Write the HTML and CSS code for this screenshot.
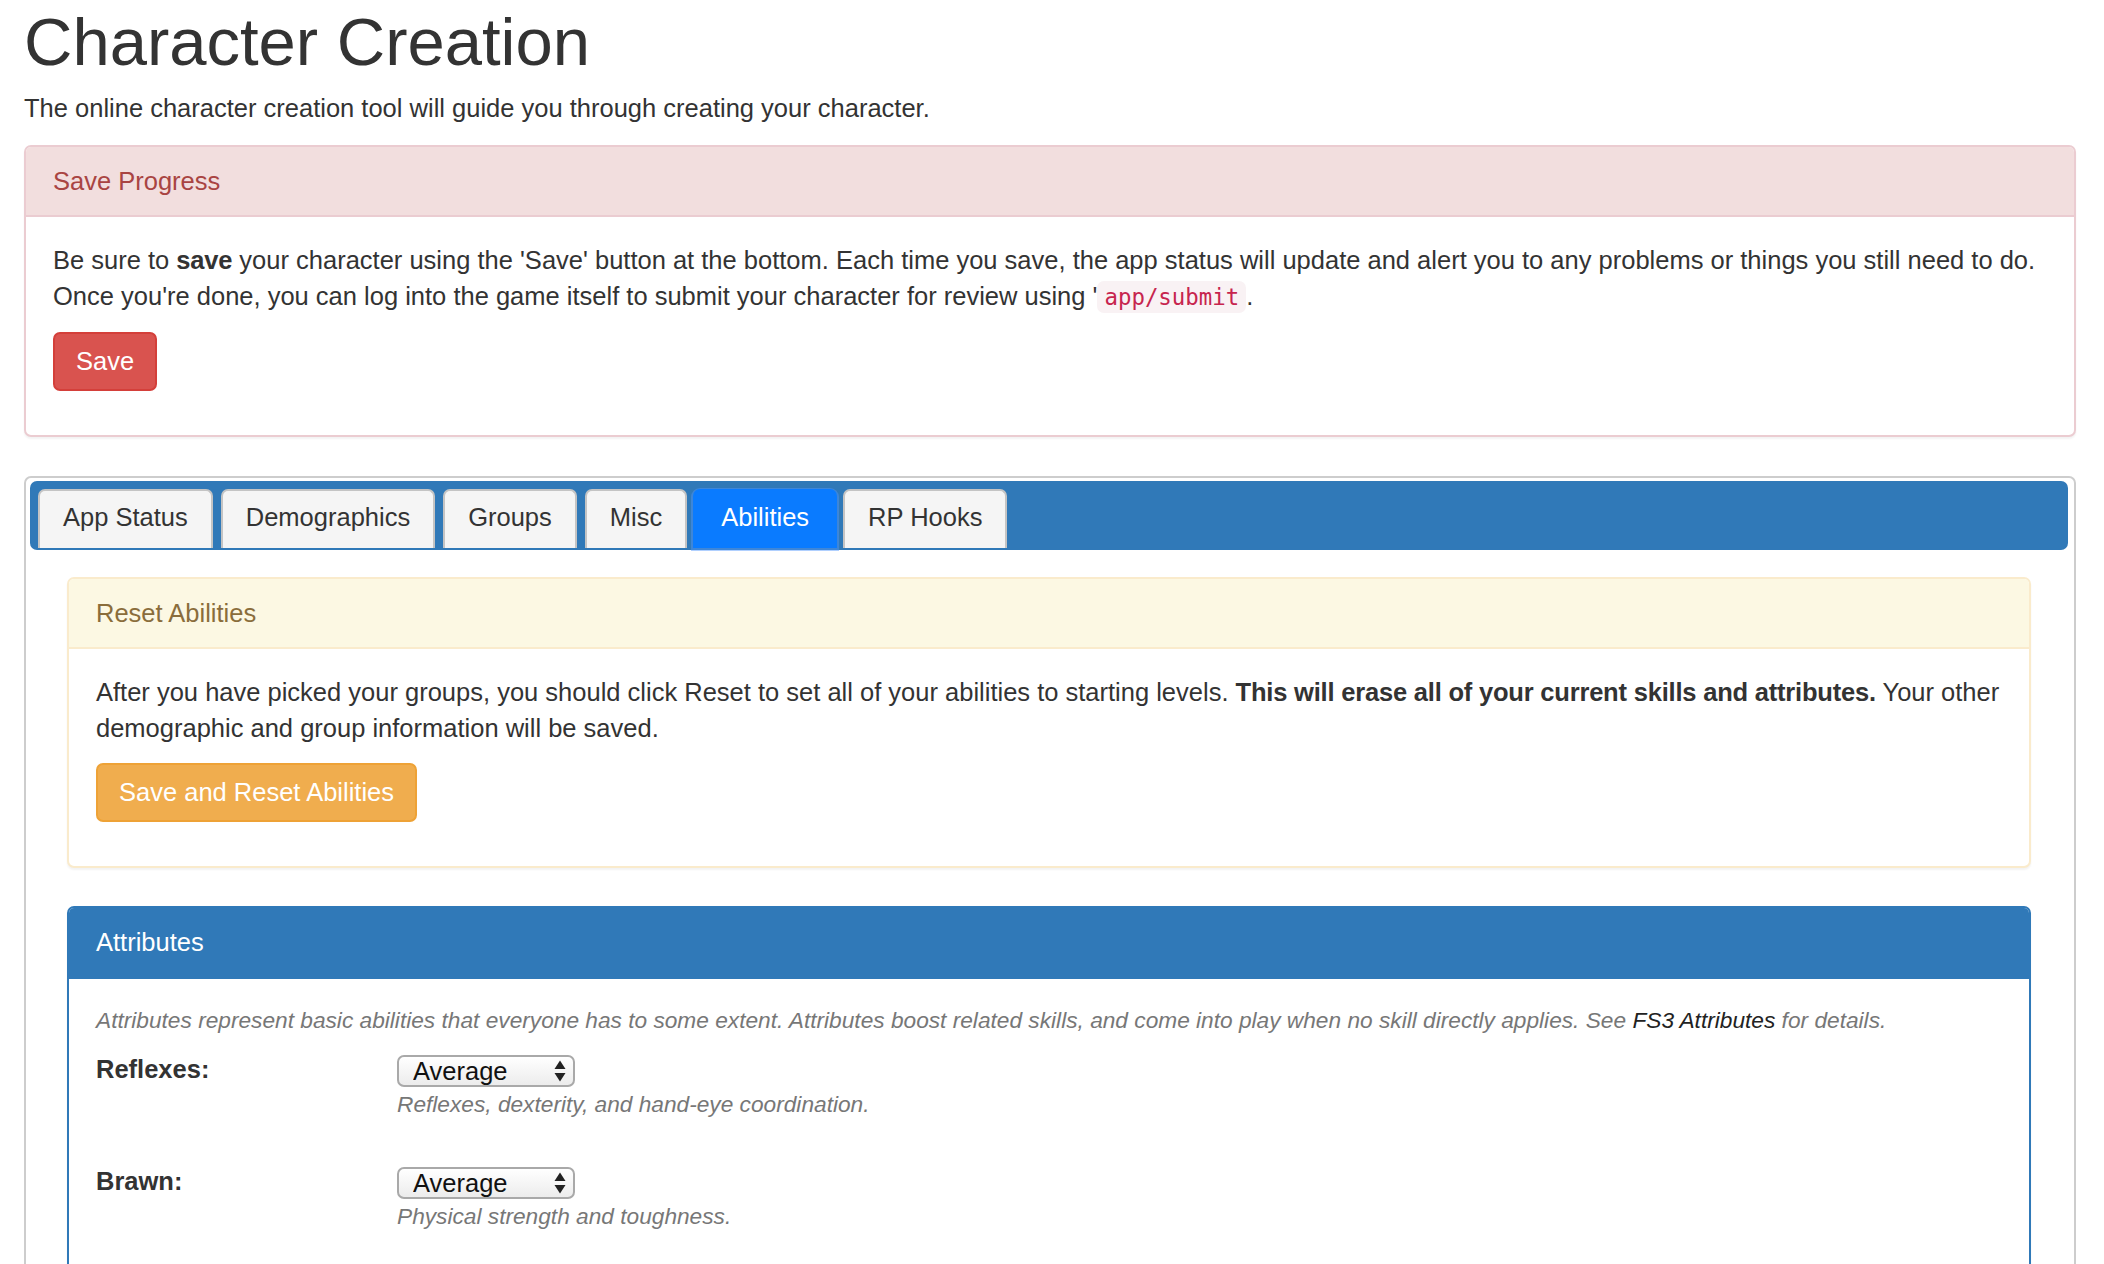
FILE: index.html
```html
<!DOCTYPE html>
<html lang="en">
<head>
<meta charset="utf-8">
<title>Character Creation</title>
<link rel="stylesheet" href="styles.css">
</head>
<body>
<div class="page">
  <h1 class="title">Character Creation</h1>
  <p class="intro">The online character creation tool will guide you through creating your character.</p>

  <section class="panel panel-danger">
    <div class="panel-heading">Save Progress</div>
    <div class="panel-body">
      <p>Be sure to <b>save</b> your character using the 'Save' button at the bottom. Each time you save, the app status will update and alert you to any problems or things you still need to do. Once you're done, you can log into the game itself to submit your character for review using '<code>app/submit</code>.</p>
      <div class="actions"><button class="btn btn-danger" type="button">Save</button></div>
    </div>
  </section>

  <section class="panel panel-tabs">
    <nav class="tabbar">
      <a class="tab">App Status</a>
      <a class="tab">Demographics</a>
      <a class="tab">Groups</a>
      <a class="tab">Misc</a>
      <a class="tab tab-active">Abilities</a>
      <a class="tab">RP Hooks</a>
    </nav>
    <div class="tab-content">
      <section class="panel panel-warning">
        <div class="panel-heading">Reset Abilities</div>
        <div class="panel-body">
          <p>After you have picked your groups, you should click Reset to set all of your abilities to starting levels. <b>This will erase all of your current skills and attributes.</b> Your other demographic and group information will be saved.</p>
          <div class="actions"><button class="btn btn-warning" type="button">Save and Reset Abilities</button></div>
        </div>
      </section>

      <section class="panel panel-primary">
        <div class="panel-heading">Attributes</div>
        <div class="panel-body">
          <p class="desc">Attributes represent basic abilities that everyone has to some extent. Attributes boost related skills, and come into play when no skill directly applies. See <a class="link">FS3 Attributes</a> for details.</p>

          <div class="attr-row">
            <div class="attr-label">Reflexes:</div>
            <div class="attr-field">
              <div class="select-wrap">
                <select class="select"><option>Average</option><option>Good</option><option>Great</option></select>
                <svg class="select-arrows" width="12" height="22" viewBox="0 0 12 22"><path d="M6 0.5 L11.5 9 L0.5 9 Z" fill="#222"/><path d="M0.5 13 L11.5 13 L6 21.5 Z" fill="#222"/></svg>
              </div>
              <div class="help">Reflexes, dexterity, and hand-eye coordination.</div>
            </div>
          </div>

          <div class="attr-row">
            <div class="attr-label">Brawn:</div>
            <div class="attr-field">
              <div class="select-wrap">
                <select class="select"><option>Average</option><option>Good</option><option>Great</option></select>
                <svg class="select-arrows" width="12" height="22" viewBox="0 0 12 22"><path d="M6 0.5 L11.5 9 L0.5 9 Z" fill="#222"/><path d="M0.5 13 L11.5 13 L6 21.5 Z" fill="#222"/></svg>
              </div>
              <div class="help">Physical strength and toughness.</div>
            </div>
          </div>

          <div class="attr-row">
            <div class="attr-label">Wits:</div>
            <div class="attr-field">
              <div class="select-wrap">
                <select class="select"><option>Average</option><option>Good</option><option>Great</option></select>
                <svg class="select-arrows" width="12" height="22" viewBox="0 0 12 22"><path d="M6 0.5 L11.5 9 L0.5 9 Z" fill="#222"/><path d="M0.5 13 L11.5 13 L6 21.5 Z" fill="#222"/></svg>
              </div>
              <div class="help">Mental quickness and perception.</div>
            </div>
          </div>

          <div class="attr-row">
            <div class="attr-label">Grit:</div>
            <div class="attr-field">
              <div class="select-wrap">
                <select class="select"><option>Average</option><option>Good</option><option>Great</option></select>
                <svg class="select-arrows" width="12" height="22" viewBox="0 0 12 22"><path d="M6 0.5 L11.5 9 L0.5 9 Z" fill="#222"/><path d="M0.5 13 L11.5 13 L6 21.5 Z" fill="#222"/></svg>
              </div>
              <div class="help">Willpower and endurance.</div>
            </div>
          </div>
        </div>
      </section>
    </div>
  </section>
</div>
</body>
</html>
```

FILE: styles.css
```css
* { box-sizing: border-box; }

html, body {
  margin: 0;
  padding: 0;
  background: #fff;
}

body {
  font-family: "Liberation Sans", Arial, Helvetica, sans-serif;
  font-size: 25.5px;
  line-height: 36px;
  color: #333;
}

.page {
  padding: 0 28px 0 24px;
}

.title {
  margin: 6px 0 13px;
  font-size: 67px;
  line-height: 71px;
  font-weight: 500;
  color: #333;
}

.intro {
  margin: 0 0 19px;
}

p { margin: 0 0 17px; }

b { font-weight: 700; letter-spacing: -0.2px; }

code {
  font-family: "DejaVu Sans Mono", "Liberation Mono", monospace;
  font-size: 22.4px;
  padding: 3px 7px;
  color: #c7254e;
  background: #f9f2f4;
  border-radius: 7px;
}

/* Panels */
.panel {
  border: 2px solid #ddd;
  border-radius: 7px;
  background: #fff;
  margin-bottom: 39px;
  box-shadow: 0 2px 2px rgba(0,0,0,0.05);
}

.panel-heading {
  padding: 16px 27px 16px;
  line-height: 36px;
  border-bottom: 2px solid transparent;
  border-radius: 5px 5px 0 0;
}

.panel-body {
  padding: 25px 22px 26px 27px;
}

.actions {
  margin-bottom: 18px;
}

.panel-danger { border-color: #ebccd1; }
.panel-danger > .panel-heading {
  background: #f2dede;
  color: #a94442;
  border-bottom-color: #ebccd1;
}

.panel-warning { border-color: #faebcc; margin-bottom: 38px; }
.panel-warning > .panel-heading {
  background: #fcf8e3;
  color: #8a6d3b;
  border-bottom-color: #faebcc;
}

.panel-primary { border-color: #3079b8; margin-bottom: 0; }
.panel-primary > .panel-heading {
  background: #3079b8;
  color: #fff;
  padding-bottom: 17px;
  border-bottom-color: #3079b8;
}
.panel-primary > .panel-body {
  padding-top: 23px;
}

/* Buttons */
.btn {
  display: inline-block;
  font-family: inherit;
  font-size: 25.5px;
  line-height: 35px;
  padding: 10px 21px;
  border: 2px solid transparent;
  border-radius: 7px;
  color: #fff;
  cursor: pointer;
}

.btn-danger {
  background: #d9534f;
  border-color: #d43f3a;
}

.btn-warning {
  background: #f0ad4e;
  border-color: #eea236;
}

/* Tabs panel */
.panel-tabs {
  border-color: #cdcdcd;
  padding: 3px 6px 400px 4px;
  box-shadow: none;
  margin-bottom: 0;
}

.tabbar {
  display: flex;
  gap: 8px;
  background: #3079b8;
  border-radius: 7px;
  padding: 8px 8px 2px;
}

.tab {
  display: block;
  padding: 8px 23px 13px;
  line-height: 36px;
  background: #f5f5f5;
  border: 2px solid #c4c4c4;
  border-bottom: none;
  border-radius: 7px 7px 0 0;
  color: #333;
  cursor: pointer;
}

.tab-active {
  background: #0a7bff;
  border-color: #0a7bff;
  color: #fff;
  margin: 0 -2px;
  padding-left: 26px;
  padding-right: 26px;
  box-shadow: 0 1px 0 2px rgba(80, 150, 255, 0.45);
  position: relative;
}

.tab-content {
  padding: 27px 37px 0;
}

/* Attributes */
.desc {
  font-style: italic;
  font-size: 22.7px;
  color: #777;
  margin-bottom: 13px;
}

.link {
  color: #222;
  text-decoration: none;
}

.attr-row {
  display: grid;
  grid-template-columns: 301px 1fr;
  margin-bottom: 43px;
}

.attr-label {
  font-weight: 700;
  line-height: 36px;
}

.attr-field {
  display: flex;
  flex-direction: column;
  align-items: flex-start;
}

.select-wrap {
  position: relative;
  margin-top: 4px;
}

.select {
  appearance: none;
  -webkit-appearance: none;
  display: block;
  width: 178px;
  height: 32px;
  margin: 0;
  padding: 0 30px 0 14px;
  font-family: "Liberation Sans", Arial, sans-serif;
  font-size: 25.5px;
  color: #111;
  background: linear-gradient(#ffffff, #ececec);
  border: 2px solid #a9a9a9;
  border-radius: 7px;
}

.select-arrows {
  position: absolute;
  right: 9px;
  top: 5px;
  pointer-events: none;
}

.help {
  margin-top: 1px;
  font-style: italic;
  font-size: 22.7px;
  line-height: 32px;
  color: #777;
}
```
